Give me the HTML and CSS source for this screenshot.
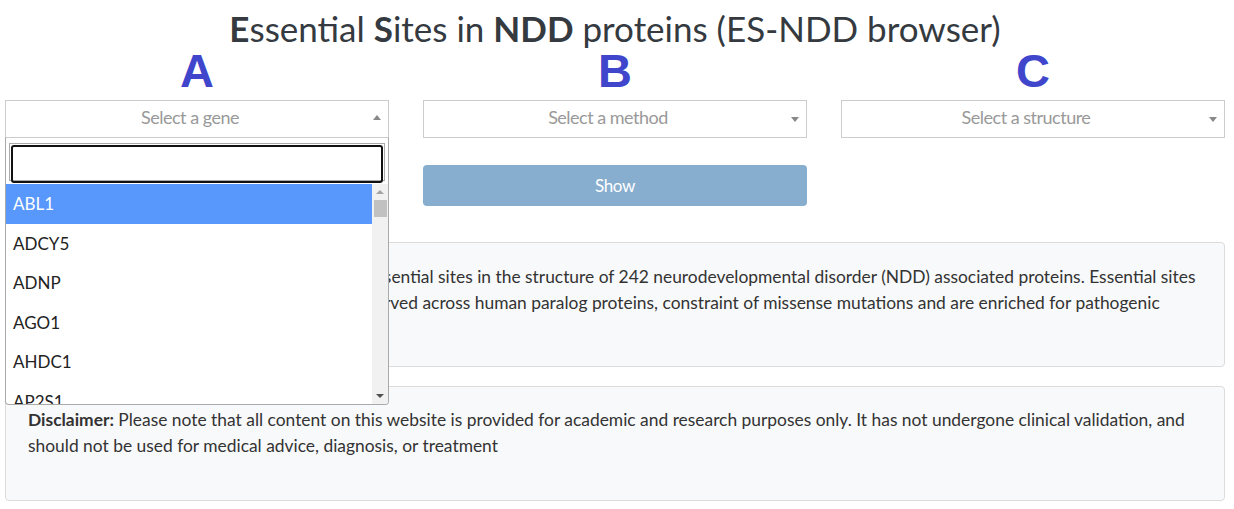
FILE: index.html
```html
<!DOCTYPE html>
<html>
<head>
<meta charset="utf-8">
<link rel="stylesheet" href="styles.css">
</head>
<body>
<div class="page">
  <h1 class="title"><b>E</b>ssential <b>S</b>ites in <b>NDD</b> proteins (ES-NDD browser)</h1>
  <div class="controls">
    <div class="col">
      <div class="letter">A</div>
      <div class="select open">
        <div class="select-box">
          <span class="placeholder">Select a gene</span>
          <span class="arrow up"></span>
        </div>
        <div class="dropdown">
          <div class="search"><div class="search-inner"></div></div>
          <div class="results">
            <ul class="options">
              <li class="opt hl">ABL1</li>
              <li class="opt">ADCY5</li>
              <li class="opt">ADNP</li>
              <li class="opt">AGO1</li>
              <li class="opt">AHDC1</li>
              <li class="opt">AP2S1</li>
            </ul>
            <div class="scrollbar">
              <span class="sb-up"></span>
              <span class="sb-thumb"></span>
              <span class="sb-fill"></span>
              <span class="sb-down"></span>
            </div>
          </div>
        </div>
      </div>
    </div>
    <div class="col">
      <div class="letter">B</div>
      <div class="select">
        <div class="select-box">
          <span class="placeholder">Select a method</span>
          <span class="arrow"></span>
        </div>
      </div>
      <button class="show">Show</button>
    </div>
    <div class="col">
      <div class="letter">C</div>
      <div class="select">
        <div class="select-box">
          <span class="placeholder">Select a structure</span>
          <span class="arrow"></span>
        </div>
      </div>
    </div>
  </div>
  <div class="box info">
    <p>This browser provides an interactive view of essential sites in the structure of 242 neurodevelopmental disorder (NDD) associated proteins. Essential sites are predicted by structure and are highly conserved across human paralog proteins, constraint of missense mutations and are enriched for pathogenic variants.</p>
  </div>
  <div class="box disclaimer">
    <p><b>Disclaimer:</b> Please note that all content on this website is provided for academic and research purposes only. It has not undergone clinical validation, and should not be used for medical advice, diagnosis, or treatment</p>
  </div>
</div>
</body>
</html>
```

FILE: styles.css
```css
* { box-sizing: border-box; }
html, body { margin: 0; padding: 0; background: #fff; }
body { font-family: Lato, "Open Sans", sans-serif; color: #333; }
.page { padding: 0 9px 0 5px; }

.title {
  margin: 0;
  padding-top: 8px;
  height: 48px;
  font-size: 35px;
  line-height: 40px;
  font-weight: 400;
  text-align: center;
  color: #343a40;
}
.title b { font-weight: 700; }

.controls {
  display: grid;
  grid-template-columns: repeat(3, 1fr);
  column-gap: 34px;
}
.col { display: flex; flex-direction: column; }

.letter {
  height: 52px;
  font-family: "Liberation Sans", Arial, sans-serif;
  font-weight: 700;
  font-size: 47px;
  line-height: 46px;
  color: #4046cc;
  text-align: center;
}

.select { position: relative; }
.select-box {
  height: 38px;
  border: 1px solid #cccccc;
  display: flex;
  align-items: center;
  justify-content: center;
  position: relative;
  padding-right: 14px;
  padding-bottom: 5px;
}
.placeholder { color: #999; font-size: 18px; letter-spacing: -0.5px; }
.arrow {
  position: absolute;
  right: 7px;
  top: 16px;
  width: 0; height: 0;
  border-left: 4px solid transparent;
  border-right: 4px solid transparent;
  border-top: 5px solid #888;
}
.arrow.up { border-top: 0; border-bottom: 5px solid #888; top: 14px; }

.dropdown {
  position: absolute;
  left: 0; right: 0;
  top: 37px;
  background: #fff;
  border: 1px solid #aaa;
  border-top: 1px solid #cccccc;
  border-radius: 0 0 4px 4px;
  overflow: hidden;
  z-index: 10;
}
.search { padding: 5px 3px 3px 3px; }
.search-inner {
  border: 1px solid #aaa;
  padding: 1px;
  height: 38px;
}
.search-inner::before {
  content: "";
  display: block;
  height: 100%;
  border: 2px solid #111;
  border-radius: 3px;
}
.results { display: flex; height: 220px; }
.options {
  list-style: none;
  margin: 0; padding: 0;
  flex: 1;
  overflow: hidden;
}
.opt {
  height: 39.5px;
  line-height: 39.5px;
  padding: 0 7px;
  font-size: 17px;
  color: #222;
}
.opt.hl { background: #5897fb; color: #fff; }

.scrollbar {
  width: 16px;
  background: #f1f1f1;
  display: flex;
  flex-direction: column;
  align-items: center;
}
.sb-up, .sb-down { width: 0; height: 0; border-left: 4px solid transparent; border-right: 4px solid transparent; }
.sb-up { border-bottom: 4px solid #a3a3a3; margin-top: 6px; }
.sb-thumb { width: 13px; height: 17px; background: #c1c1c1; margin-top: 6px; }
.sb-fill { flex: 1; }
.sb-down { border-top: 4px solid #505050; margin-bottom: 6px; }

.show {
  margin-top: 27px;
  height: 41px;
  border: 0;
  border-radius: 4px;
  background: #88aecf;
  color: #fff;
  font-family: Lato, sans-serif;
  font-size: 17px;
  letter-spacing: -0.3px;
}

.box {
  background: #f8f9fa;
  border: 1px solid #dcdcdc;
  border-radius: 4px;
  padding: 21px 22px;
  font-size: 17.4px;
  line-height: 26px;
}
.box p { margin: 0; }
.info { margin-top: 36px; height: 125px; }
.disclaimer { margin-top: 19px; height: 115px; padding-top: 20px; }
.disclaimer b { font-weight: 700; }
```
